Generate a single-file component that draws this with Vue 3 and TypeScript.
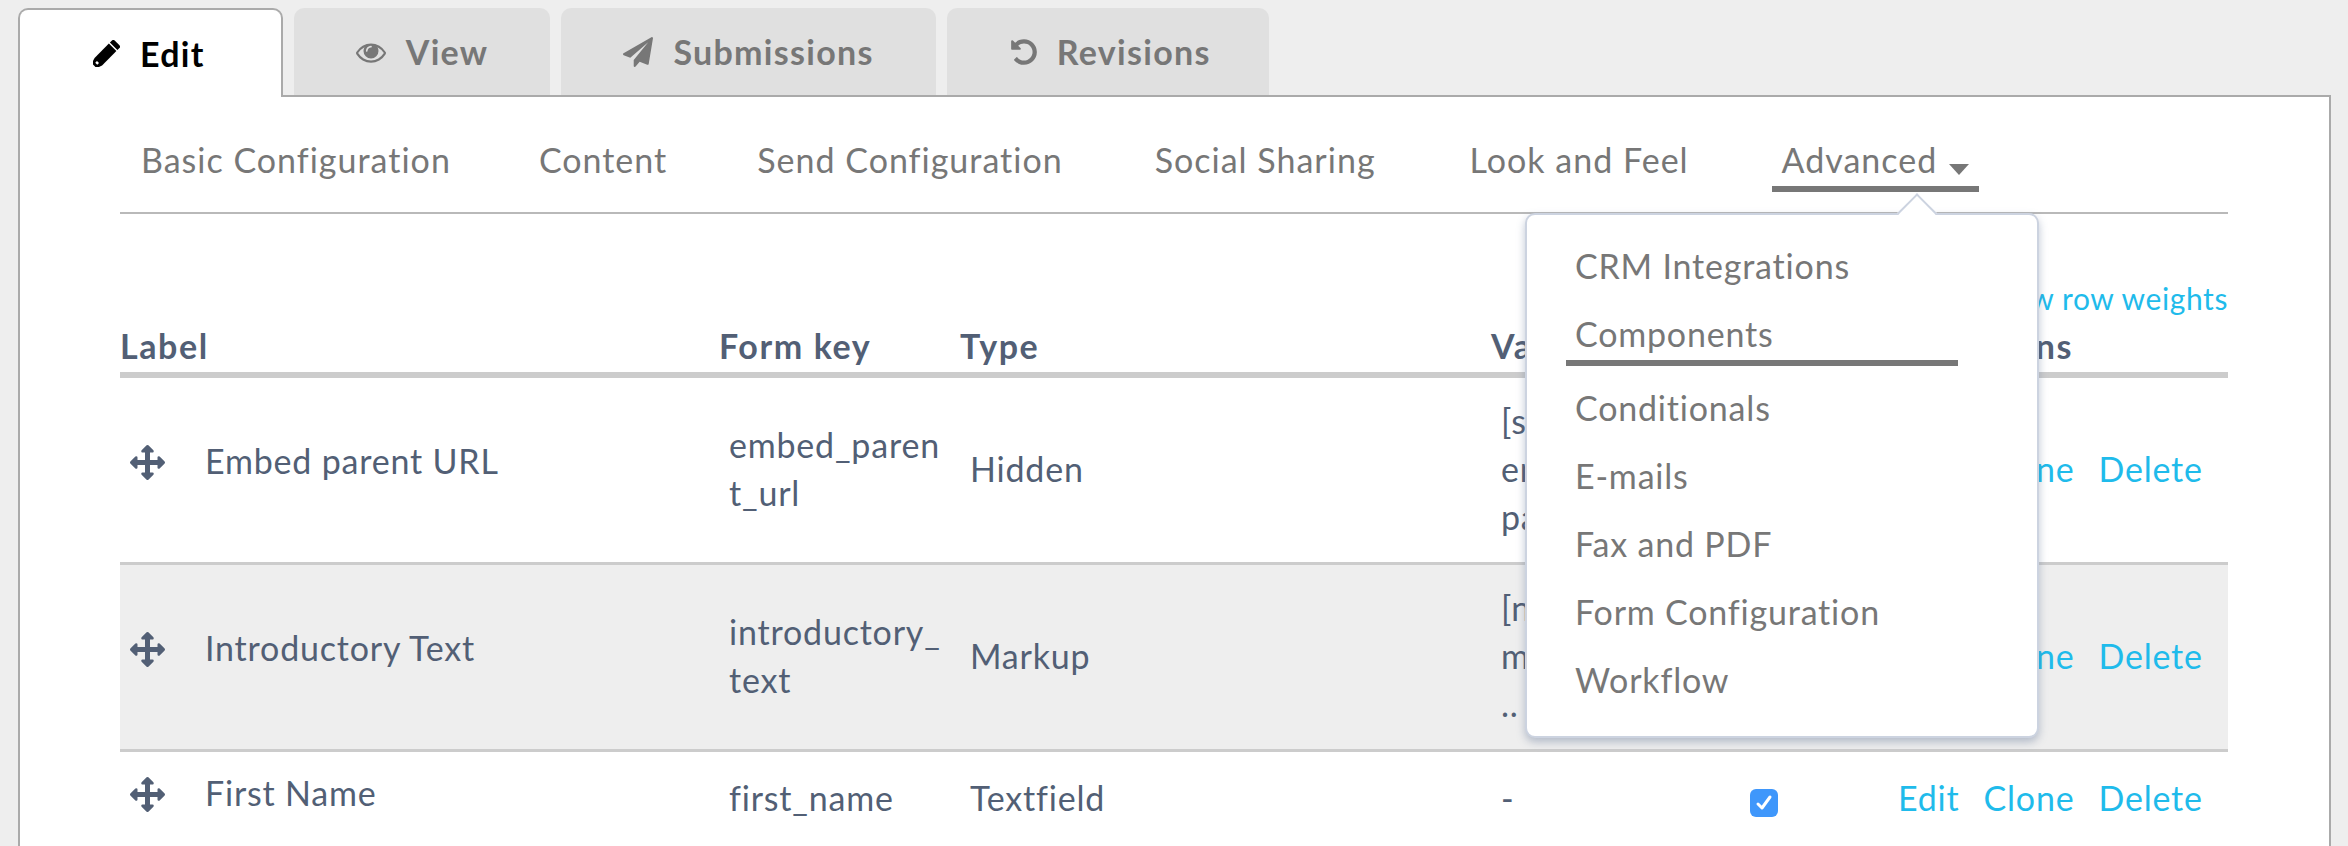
<script setup lang="ts">
const tabs = [
  { label: 'Edit', icon: 'pencil', active: true },
  { label: 'View', icon: 'eye', active: false },
  { label: 'Submissions', icon: 'plane', active: false },
  { label: 'Revisions', icon: 'undo', active: false },
]
const icons: Record<string, string> = {
  eye: 'M1664 960q-152-236-381-353 61 104 61 225 0 185-131.5 316.5t-316.5 131.5-316.5-131.5-131.5-316.5q0-121 61-225-229 117-381 353 133 205 333.5 326.5t434.5 121.5 434.5-121.5 333.5-326.5zm-720-384q0-20-14-34t-34-14q-125 0-214.5 89.5t-89.5 214.5q0 20 14 34t34 14 34-14 14-34q0-86 61-147t147-61q20 0 34-14t14-34zm848 384q0 34-20 69-140 230-376.5 368.5t-499.5 138.5-499.5-139-376.5-368q-20-35-20-69t20-69q140-229 376.5-368t499.5-139 499.5 139 376.5 368q20 35 20 69z',
  plane: 'M1764 11q33 24 27 64l-256 1536q-5 29-32 45-14 8-31 8-11 0-24-5l-453-185-242 295q-18 23-49 23-13 0-22-4-19-7-30.5-23.5t-11.5-36.5v-349l864-1059-1069 925-395-162q-37-14-40-55-2-40 32-59l1664-960q15-9 32-9 20 0 36 11z',
  undo: 'M1664 896q0 156-61 298t-164 245-245 164-298 61q-172 0-327-72.5t-264-204.5q-7-10-6.5-22.5t8.5-20.5l137-138q10-9 25-9 16 2 23 12 73 95 179 147t225 52q104 0 198.5-40.5t163.5-109.5 109.5-163.5 40.5-198.5-40.5-198.5-109.5-163.5-163.5-109.5-198.5-40.5q-98 0-188 35.5t-160 101.5l137 138q31 30 14 69-17 40-59 40h-448q-26 0-45-19t-19-45v-448q0-42 40-59 39-17 69 14l130 129q107-101 244.5-156.5t284.5-55.5q156 0 298 61t245 164 164 245 61 298z',
}
const move = 'M1792 896q0 26-19 45l-256 256q-19 19-45 19t-45-19-19-45v-128h-384v384h128q26 0 45 19t19 45-19 45l-256 256q-19 19-45 19t-45-19l-256-256q-19-19-19-45t19-45 45-19h128v-384h-384v128q0 26-19 45t-45 19-45-19l-256-256q-19-19-19-45t19-45l256-256q19-19 45-19t45 19 19 45v128h384v-384h-128q-26 0-45-19t-19-45 19-45l256-256q19-19 45-19t45 19l256 256q19 19 19 45t-19 45-45 19h-128v384h384v-128q0-26 19-45t45-19 45 19l256 256q19 19 19 45z'
const nav = ['Basic Configuration', 'Content', 'Send Configuration', 'Social Sharing', 'Look and Feel']
const menu = ['CRM Integrations', 'Components', 'Conditionals', 'E-mails', 'Fax and PDF', 'Form Configuration', 'Workflow']
const rows = [
  { label: 'Embed parent URL', key: 'embed_parent_url', type: 'Hidden', value: ['[submission:', 'embed_', 'parent_url]'], checked: false, alt: false },
  { label: 'Introductory Text', key: 'introductory_text', type: 'Markup', value: ['[no value]', 'markup', '..'], checked: false, alt: true },
  { label: 'First Name', key: 'first_name', type: 'Textfield', value: ['-'], checked: true, alt: false },
]
</script>

<template>
  <div class="page">
    <ul class="tabs">
      <li v-for="t in tabs" :key="t.label" class="tab" :class="{ active: t.active }">
        <svg v-if="t.icon === 'pencil'" class="tab-icon pencil" viewBox="0 0 28 28">
          <g transform="rotate(45 14 14)" fill="currentColor">
            <path d="M8.5 0.5a2 2 0 0 1 2-2h7a2 2 0 0 1 2 2v3h-11z" />
            <path d="M8.5 5h11v21l-2 6h-7l-2-6z" />
            <rect x="12.5" y="26.5" width="3" height="2.5" fill="#fff" />
          </g>
        </svg>
        <svg v-else class="tab-icon" viewBox="0 0 1792 1792"><path :d="icons[t.icon]" fill="currentColor" /></svg>
        <span>{{ t.label }}</span>
      </li>
    </ul>
    <section class="panel">
      <ul class="subnav">
        <li v-for="n in nav" :key="n" class="sub">{{ n }}</li>
        <li class="sub current">Advanced <i class="caret"></i></li>
      </ul>
      <div class="dropdown">
        <i class="arrow"></i>
        <ul>
          <li v-for="m in menu" :key="m" class="item" :class="{ on: m === 'Components' }"><span>{{ m }}</span></li>
        </ul>
      </div>
      <a class="weights">Show row weights</a>
      <table>
        <colgroup>
          <col class="c1" /><col class="c2" /><col class="c3" /><col class="c4" /><col class="c5" /><col class="c6" />
        </colgroup>
        <thead>
          <tr><th>Label</th><th>Form key</th><th>Type</th><th>Value</th><th>Required</th><th>Operations</th></tr>
        </thead>
        <tbody>
          <tr v-for="r in rows" :key="r.key" :class="{ alt: r.alt }">
            <td class="label-cell">
              <div class="label-wrap">
                <svg class="move" viewBox="0 0 1792 1792"><path :d="move" fill="currentColor" /></svg>
                <span>{{ r.label }}</span>
              </div>
            </td>
            <td class="key">{{ r.key }}</td>
            <td>{{ r.type }}</td>
            <td><div v-for="v in r.value" :key="v">{{ v }}</div></td>
            <td class="check-cell">
              <span v-if="r.checked" class="check">
                <svg viewBox="0 0 28 28"><path d="M8 15l4 4 8-11" fill="none" stroke="#fff" stroke-width="3" stroke-linecap="round" stroke-linejoin="round" /></svg>
              </span>
            </td>
            <td class="ops"><a>Edit</a><a>Clone</a><a>Delete</a></td>
          </tr>
        </tbody>
      </table>
    </section>
  </div>
</template>

<style>
html, body { margin: 0; overflow: hidden; background: #eee; }
</style>

<style scoped>
.page {
  width: 2348px;
  height: 846px;
  overflow: hidden;
  background: #eee;
  font-family: Lato, "Open Sans", sans-serif;
  font-size: 34px;
  letter-spacing: .8px;
  padding-top: 8px;
  box-sizing: border-box;
}
ul { list-style: none; margin: 0; padding: 0; }
.tabs { display: flex; gap: 11px; margin-left: 18px; height: 87px; }
.tab {
  display: flex;
  align-items: center;
  gap: 20px;
  height: 87px;
  padding: 0 62px;
  background: #e0e0e0;
  color: #777;
  font-weight: 700;
  border-radius: 10px 10px 0 0;
  box-sizing: border-box;
  letter-spacing: 1.3px;
}
.tab:last-child { gap: 18px; padding-right: 58px; }
.tab.active {
  height: 89px;
  padding: 0 76px 0 73px;
  background: #fff;
  color: #000;
  border: 2px solid #aaa;
  border-bottom: 0;
  position: relative;
  z-index: 2;
}
.tab-icon { width: 30px; height: 30px; flex: none; }
.pencil { width: 27px; height: 27px; }
.panel {
  position: relative;
  margin-right: 17px;
  margin-left: 18px;
  height: 760px;
  box-sizing: border-box;
  padding: 0 101px 0 100px;
  background: #fff;
  border: 2px solid #aaa;
}
.subnav {
  display: flex;
  gap: 72px;
  padding: 40px 0 20px 11px;
  border-bottom: 2px solid #b9b9b9;
  height: 117px;
  box-sizing: border-box;
}
.sub {
  padding: 0 10px 1px;
  height: 55px;
  line-height: 46px;
  letter-spacing: 1px;
  color: #777;
  box-sizing: border-box;
  white-space: nowrap;
}
.sub:nth-child(2) { margin-left: -4px; }
.sub:nth-child(3) { margin-left: -2px; }
.sub:nth-child(5) { margin-left: 2px; }
.sub:nth-child(6) { margin-left: 1px; }
.sub.current { border-bottom: 6px solid #777; }
.caret {
  display: inline-block;
  width: 0;
  height: 0;
  margin-left: 2px;
  vertical-align: -2px;
  border-left: 10px solid transparent;
  border-right: 10px solid transparent;
  border-top: 11px solid #777;
}
.dropdown {
  position: absolute;
  left: 1505px;
  top: 116px;
  width: 514px;
  height: 525px;
  box-sizing: border-box;
  padding-top: 17px;
  background: #fff;
  border: 2px solid #ccd3e0;
  border-radius: 10px;
  box-shadow: 0 4px 8px rgba(90, 110, 145, .4);
  z-index: 5;
}
.arrow {
  position: absolute;
  left: 376px;
  top: -16px;
  width: 28px;
  height: 28px;
  background: #fff;
  border-top: 2px solid #ccd3e0;
  border-left: 2px solid #ccd3e0;
  box-sizing: border-box;
  transform: rotate(45deg);
}
.item {
  height: 68px;
  line-height: 68px;
  padding-left: 48px;
  color: #777;
  position: relative;
}
.item.on { height: 74px; padding-left: 39px; }
.item.on span {
  display: block;
  width: 392px;
  height: 66px;
  line-height: 68px;
  padding-left: 9px;
  box-sizing: border-box;
  border-bottom: 6px solid #777;
}
.weights {
  display: block;
  margin-top: 64px;
  margin-bottom: 4px;
  line-height: 40px;
  font-size: 30px;
  letter-spacing: .6px;
  text-align: right;
  color: #1fbbeb;
}
table {
  width: 2108px;
  table-layout: fixed;
  border-collapse: collapse;
  color: #525f75;
}
col.c1 { width: 599px; }
col.c2 { width: 241px; }
col.c3 { width: 531px; }
col.c4 { width: 249px; }
col.c5 { width: 148px; }
col.c6 { width: 340px; }
th {
  text-align: left;
  padding: 0 0 2px;
  line-height: 48px;
  font-weight: 700;
  letter-spacing: 1.6px;
  border-bottom: 6px solid #ccc;
}
td {
  padding: 19px 0 21px 10px;
  line-height: 48px;
  vertical-align: middle;
  border-bottom: 3px solid #ccc;
}
tr.alt td { background: #eee; }
td.label-cell { padding: 20px 0 38px 10px; }
tbody tr:last-child td { padding-top: 22px; padding-bottom: 22px; border-bottom: 0; }
tbody tr:last-child td.label-cell { padding-top: 17px; padding-bottom: 27px; }
.label-wrap { display: flex; align-items: center; gap: 40px; }
.move { width: 35px; height: 35px; flex: none; margin-top: 3px; }
.key { word-break: break-all; padding-right: 12px; }
.check {
  display: block;
  width: 28px;
  height: 28px;
  margin-top: 10px;
  background: #3f97fb;
  border-radius: 6px;
}
.check svg { display: block; width: 28px; height: 28px; }
.ops { color: #1fbbeb; white-space: nowrap; }
.ops a + a { margin-left: 24px; }
</style>
